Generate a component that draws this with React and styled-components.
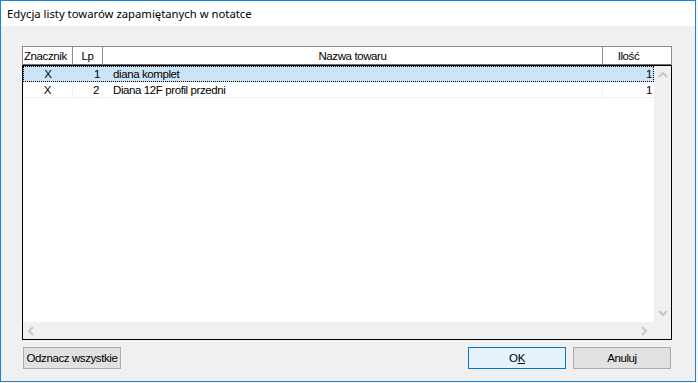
import React from 'react';
import styled, { createGlobalStyle } from 'styled-components';

const GlobalStyle = createGlobalStyle`
  html, body {
    margin: 0;
    padding: 0;
    background: #f4f4f4;
  }
  * { box-sizing: border-box; }
`;

const gridFont = `"Liberation Sans", Arial, sans-serif`;

const Window = styled.div`
  width: 696px;
  height: 382px;
  border: 1px solid #1883d7;
  background: #f0f0f0;
  display: flex;
  flex-direction: column;
`;

const TitleBar = styled.div`
  height: 25px;
  background: #fff;
  display: flex;
  align-items: center;
  padding-left: 6px;
  font-family: "Noto Sans", "Segoe UI", sans-serif;
  font-size: 11.3px;
  color: #000;
`;

const Client = styled.div`
  flex: 1;
  padding: 20px 23px 0 21px;
  display: flex;
  flex-direction: column;
`;

const Table = styled.div`
  width: 650px;
  height: 294px;
  display: flex;
  flex-direction: column;
  font-family: ${gridFont};
  font-size: 11.5px;
  letter-spacing: -0.4px;
  color: #000;
`;

const Header = styled.div`
  height: 19px;
  display: grid;
  grid-template-columns: 50px 30px 500px 1fr;
  background: #fff;
  border-top: 1px solid #8c8c8c;
  border-left: 1px solid #8c8c8c;
  border-right: 1px solid #8c8c8c;
`;

const HeadCell = styled.div`
  display: flex;
  align-items: center;
  justify-content: ${p => (p.$left ? 'flex-start' : 'center')};
  padding-left: ${p => (p.$left ? '1px' : '0')};
  padding-right: ${p => p.$pr || 0}px;
  border-right: ${p => (p.$last ? 'none' : '1px solid #8c8c8c')};
  border-bottom: 1px solid #6e6e6e;
  white-space: nowrap;
  overflow: hidden;
`;

const Body = styled.div`
  flex: 1;
  border: 1px solid #000;
  display: grid;
  grid-template-columns: 1fr 17px;
  grid-template-rows: 1fr 17px;
  background: #fff;
`;

const Rows = styled.div`
  background: #fff;
`;

const Row = styled.div`
  height: 16px;
  display: grid;
  grid-template-columns: 50px 30px 500px 1fr;
  background: ${p => (p.$selected ? '#cde4f7' : '#fff')};
  outline: ${p => (p.$selected ? '1px dotted #000' : 'none')};
  outline-offset: -1px;
`;

const Cell = styled.div`
  display: flex;
  align-items: center;
  justify-content: ${p => p.$align || 'flex-start'};
  padding-left: ${p => p.$pl || 0}px;
  padding-right: ${p => p.$pr || 0}px;
  border-right: ${p => (p.$last || p.$selected ? 'none' : '1px solid #f0f0f0')};
  border-bottom: ${p => (p.$selected ? 'none' : '1px solid #f0f0f0')};
  white-space: nowrap;
  overflow: hidden;
`;

const VScroll = styled.div`
  background: #f0f0f0;
  display: flex;
  flex-direction: column;
  justify-content: space-between;
  align-items: center;
  padding: 5px 0 5px;
`;

const HScroll = styled.div`
  background: #f0f0f0;
  display: flex;
  justify-content: space-between;
  align-items: center;
  padding: 0 6px 0 4px;
`;

const Corner = styled.div`
  background: #f0f0f0;
`;

const ButtonRow = styled.div`
  margin-top: 7px;
  padding: 0 1px;
  display: flex;
  justify-content: space-between;
`;

const ButtonGroup = styled.div`
  display: flex;
  gap: 7px;
`;

const Button = styled.button`
  width: 98px;
  height: 22px;
  margin: 0;
  padding: 0;
  font-family: ${gridFont};
  font-size: 11.5px;
  font-weight: 400;
  letter-spacing: -0.4px;
  white-space: nowrap;
  color: #000;
  background: ${p => (p.$default ? '#e5f1fb' : '#e1e1e1')};
  border: 1px solid ${p => (p.$default ? '#0078d7' : '#adadad')};
  border-radius: 0;
`;

const Chevron = ({ dir }) => {
  const paths = {
    up: 'M1 6 L5 2 L9 6',
    down: 'M1 2 L5 6 L9 2',
    left: 'M6 1 L2 5 L6 9',
    right: 'M2 1 L6 5 L2 9',
  };
  const vertical = dir === 'up' || dir === 'down';
  return (
    <svg width={vertical ? 10 : 8} height={vertical ? 8 : 10} viewBox={vertical ? '0 0 10 8' : '0 0 8 10'}>
      <path d={paths[dir]} fill="none" stroke="#c6c6c6" strokeWidth="2" />
    </svg>
  );
};

const items = [
  { mark: 'X', lp: 1, name: 'diana komplet', qty: 1 },
  { mark: 'X', lp: 2, name: 'Diana 12F profil przedni', qty: 1 },
];

const App = () => {
  return (
    <>
      <GlobalStyle />
      <Window>
        <TitleBar>Edycja listy towarów zapamiętanych w notatce</TitleBar>
        <Client>
          <Table>
            <Header>
              <HeadCell $left>Znacznik</HeadCell>
              <HeadCell>Lp</HeadCell>
              <HeadCell>Nazwa towaru</HeadCell>
              <HeadCell $last $pr={17}>Ilość</HeadCell>
            </Header>
            <Body>
              <Rows>
                {items.map((it, i) => {
                  const sel = i === 0;
                  return (
                    <Row key={it.lp} $selected={sel}>
                      <Cell $selected={sel} $align="center">{it.mark}</Cell>
                      <Cell $selected={sel} $align="flex-end" $pr={3}>{it.lp}</Cell>
                      <Cell $selected={sel} $pl={10}>{it.name}</Cell>
                      <Cell $selected={sel} $last $align="flex-end" $pr={2}>{it.qty}</Cell>
                    </Row>
                  );
                })}
              </Rows>
              <VScroll>
                <Chevron dir="up" />
                <Chevron dir="down" />
              </VScroll>
              <HScroll>
                <Chevron dir="left" />
                <Chevron dir="right" />
              </HScroll>
              <Corner />
            </Body>
          </Table>
          <ButtonRow>
            <Button>Odznacz wszystkie</Button>
            <ButtonGroup>
              <Button $default>O<u>K</u></Button>
              <Button>Anuluj</Button>
            </ButtonGroup>
          </ButtonRow>
        </Client>
      </Window>
    </>
  );
};

export default App;
